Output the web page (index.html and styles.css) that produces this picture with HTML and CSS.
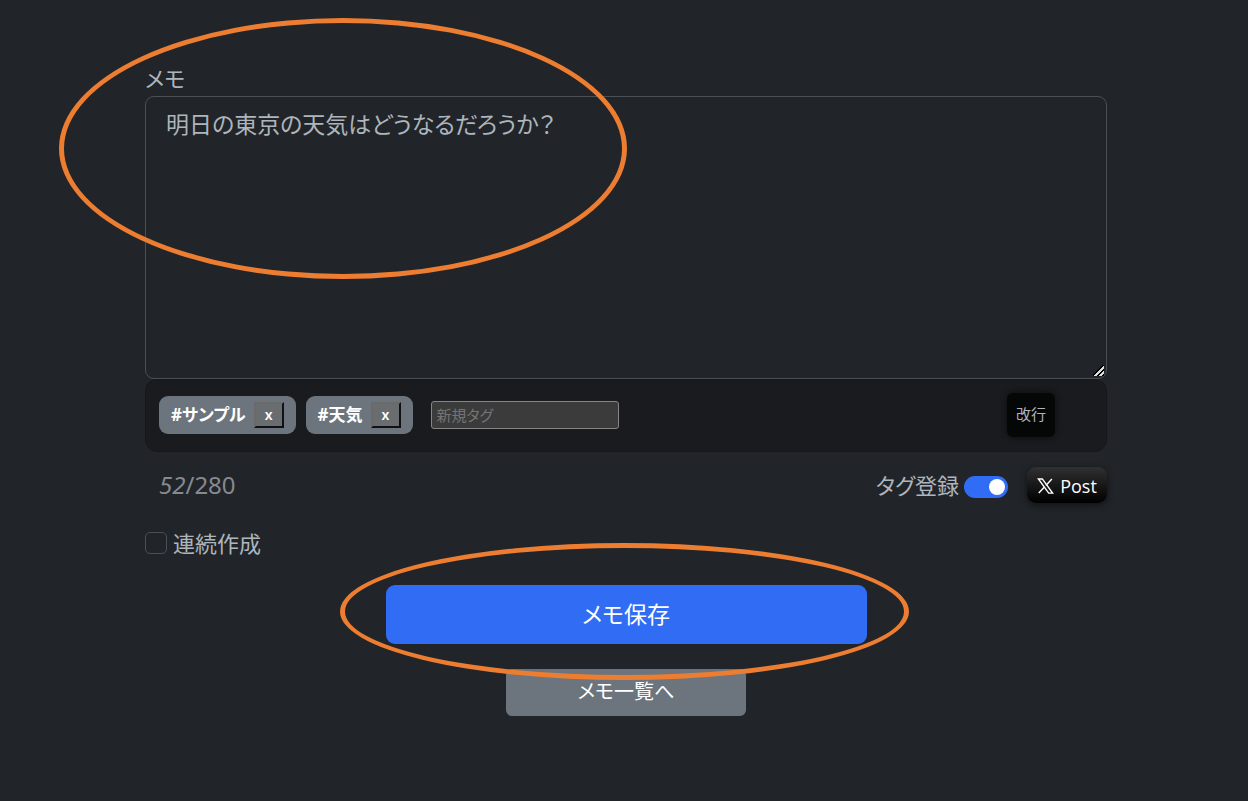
FILE: index.html
```html
<!DOCTYPE html>
<html lang="ja">
<head>
  <meta charset="UTF-8" />
  <meta name="viewport" content="width=device-width, initial-scale=1" />
  <title>メモ作成</title>
  <link rel="stylesheet" href="styles.css">
</head>
<body>
  <form class="memo-form">
    <div class="memo">
      <label for="memo">メモ</label>
      <textarea id="memo" spellcheck="false">明日の東京の天気はどうなるだろうか？</textarea>
      <span class="mark mark-memo"></span>
    </div>

    <div class="tag-bar">
      <span class="tag">#サンプル <button type="button" aria-label="サンプルを削除">x</button></span>
      <span class="tag">#天気 <button type="button" aria-label="天気を削除">x</button></span>
      <input type="text" class="tag-input" placeholder="新規タグ" aria-label="新規タグ" />
      <button type="button" class="btn-break">改行</button>
    </div>

    <div class="tools">
      <span class="count"><em>52</em>/280</span>
      <label for="tagSave">タグ登録</label>
      <input type="checkbox" id="tagSave" class="switch" role="switch" checked />
      <button type="button" class="btn-post">
        <svg viewBox="0 0 24 24" aria-hidden="true">
          <path d="M2 2h5.500L22 22h-5.500z" />
          <path d="M21 2l-8.500 9.300M10.500 13.500L2.500 22" />
        </svg>
        Post
      </button>
    </div>

    <div class="repeat">
      <input type="checkbox" id="repeat" class="check" />
      <label for="repeat">連続作成</label>
    </div>

    <div class="save">
      <button type="button" class="btn-save">メモ保存</button>
      <span class="mark mark-save"></span>
    </div>

    <button type="button" class="btn-list">メモ一覧へ</button>
  </form>
</body>
</html>
```
FILE: styles.css
```css
* { box-sizing: border-box; }
:root { color-scheme: dark; }
body {
  margin: 0;
  background-color: #212529;
  color: #adb5bd;
  font-family: "Noto Sans", "Noto Sans CJK JP", sans-serif;
  font-feature-settings: "palt";
  font-size: 22px;
  line-height: 32px;
}
button, input, textarea {
  font-family: inherit;
  font-feature-settings: inherit;
  margin: 0;
}
button { cursor: pointer; }

.memo-form {
  display: flex;
  flex-direction: column;
  padding: 60px 141px 60px 145px;
}

.memo { position: relative; }
.memo label {
  display: block;
  height: 36px;
  line-height: 36px;
}
.memo textarea {
  display: block;
  width: 100%;
  height: 283px;
  padding: 10px 20px;
  background-color: #212529;
  border: 1px solid #495057;
  border-radius: 9px;
  color: #adb5bd;
  font-size: 23px;
  line-height: 34px;
  resize: vertical;
}
.memo textarea::-webkit-resizer {
  background: linear-gradient(135deg, transparent 7px, #000 7px, #000 8px, #ddd 8px, #ddd 10px, #000 10px, #000 12px, #ddd 12px, #ddd 14px, #000 14px) 2px 2px / 11px 11px no-repeat;
}

/* オレンジの囲み */
.mark {
  position: absolute;
  z-index: 1;
  border: 5px solid #ed7d31;
  border-radius: 50%;
  pointer-events: none;
}
.mark-memo {
  top: -42px;
  left: -86px;
  width: 568px;
  height: 261px;
}
.mark-save {
  top: -42px;
  bottom: -36px;
  left: -46px;
  right: -42px;
}

.tag-bar {
  display: flex;
  align-items: center;
  gap: 10px;
  height: 73px;
  padding: 0 51px 2px 13px;
  background-color: #1a1b1e;
  border: 1px solid #15171a;
  border-radius: 12px;
}
.tag {
  display: flex;
  align-items: center;
  gap: 8px;
  height: 38px;
  padding: 0 12px;
  background-color: #6c757d;
  border-radius: 9px;
  color: #fff;
  font-size: 17px;
  font-weight: bold;
}
.tag button {
  width: 30px;
  height: 26px;
  padding: 0;
  background-color: #6a6d70;
  border: 2px solid;
  border-color: #6a6a6a #111 #111 #6a6a6a;
  color: #fff;
  font-size: 14px;
  font-weight: 600;
  line-height: 20px;
}
.tag-input {
  width: 188px;
  height: 28px;
  margin-left: 8px;
  padding: 0 5px;
  background-color: #3b3b3b;
  border: 1px solid #858585;
  border-radius: 3px;
  color: #fff;
  font-size: 15px;
}
.tag-input::placeholder { color: #757575; }
.btn-break {
  width: 48px;
  height: 44px;
  margin-left: auto;
  padding: 0 0 2px;
  background-color: #050606;
  border: none;
  border-radius: 6px;
  box-shadow: 0 0 6px #0b0c0d;
  color: #adb5bd;
  font-size: 15px;
}

.tools {
  display: flex;
  align-items: center;
  height: 66px;
  padding-left: 14px;
}
.count {
  margin-right: auto;
  color: #868a8e;
  font-size: 24px;
}
.switch {
  appearance: none;
  width: 44px;
  height: 22px;
  margin: 4px 19px 0 5px;
  padding: 3px;
  background-color: #316cf4;
  border-radius: 11px;
}
.switch::before {
  content: "";
  display: block;
  width: 16px;
  height: 16px;
  background-color: #fff;
  border-radius: 50%;
}
.switch:checked::before { margin-left: auto; }
.btn-post {
  display: flex;
  align-items: center;
  justify-content: center;
  gap: 6px;
  width: 80px;
  height: 36px;
  padding: 2px 0 0;
  background: linear-gradient(#303030, #000);
  border: none;
  border-radius: 9px;
  box-shadow: 0 2px 6px #111;
  color: #fff;
  font-family: "Open Sans", sans-serif;
  font-size: 18px;
  font-weight: 500;
}
.btn-post svg {
  width: 17px;
  height: 20px;
  fill: none;
  stroke: #fff;
  stroke-width: 2;
}

.repeat {
  display: flex;
  align-items: center;
  gap: 6px;
  height: 32px;
  margin-top: 9px;
}
.check {
  appearance: none;
  width: 22px;
  height: 22px;
  border: 1px solid #495057;
  border-radius: 5px;
}

.save {
  position: relative;
  width: 50%;
  margin: 26px auto 25px;
}
.btn-save, .btn-list {
  padding: 0 0 4px;
  border: none;
  color: #fff;
}
.btn-save {
  display: block;
  width: 100%;
  height: 59px;
  background-color: #316cf4;
  border-radius: 9px;
  font-size: 23px;
}
.btn-list {
  align-self: center;
  width: 25%;
  height: 47px;
  background-color: #6c757d;
  border-radius: 6px;
  font-size: 20px;
}
```
